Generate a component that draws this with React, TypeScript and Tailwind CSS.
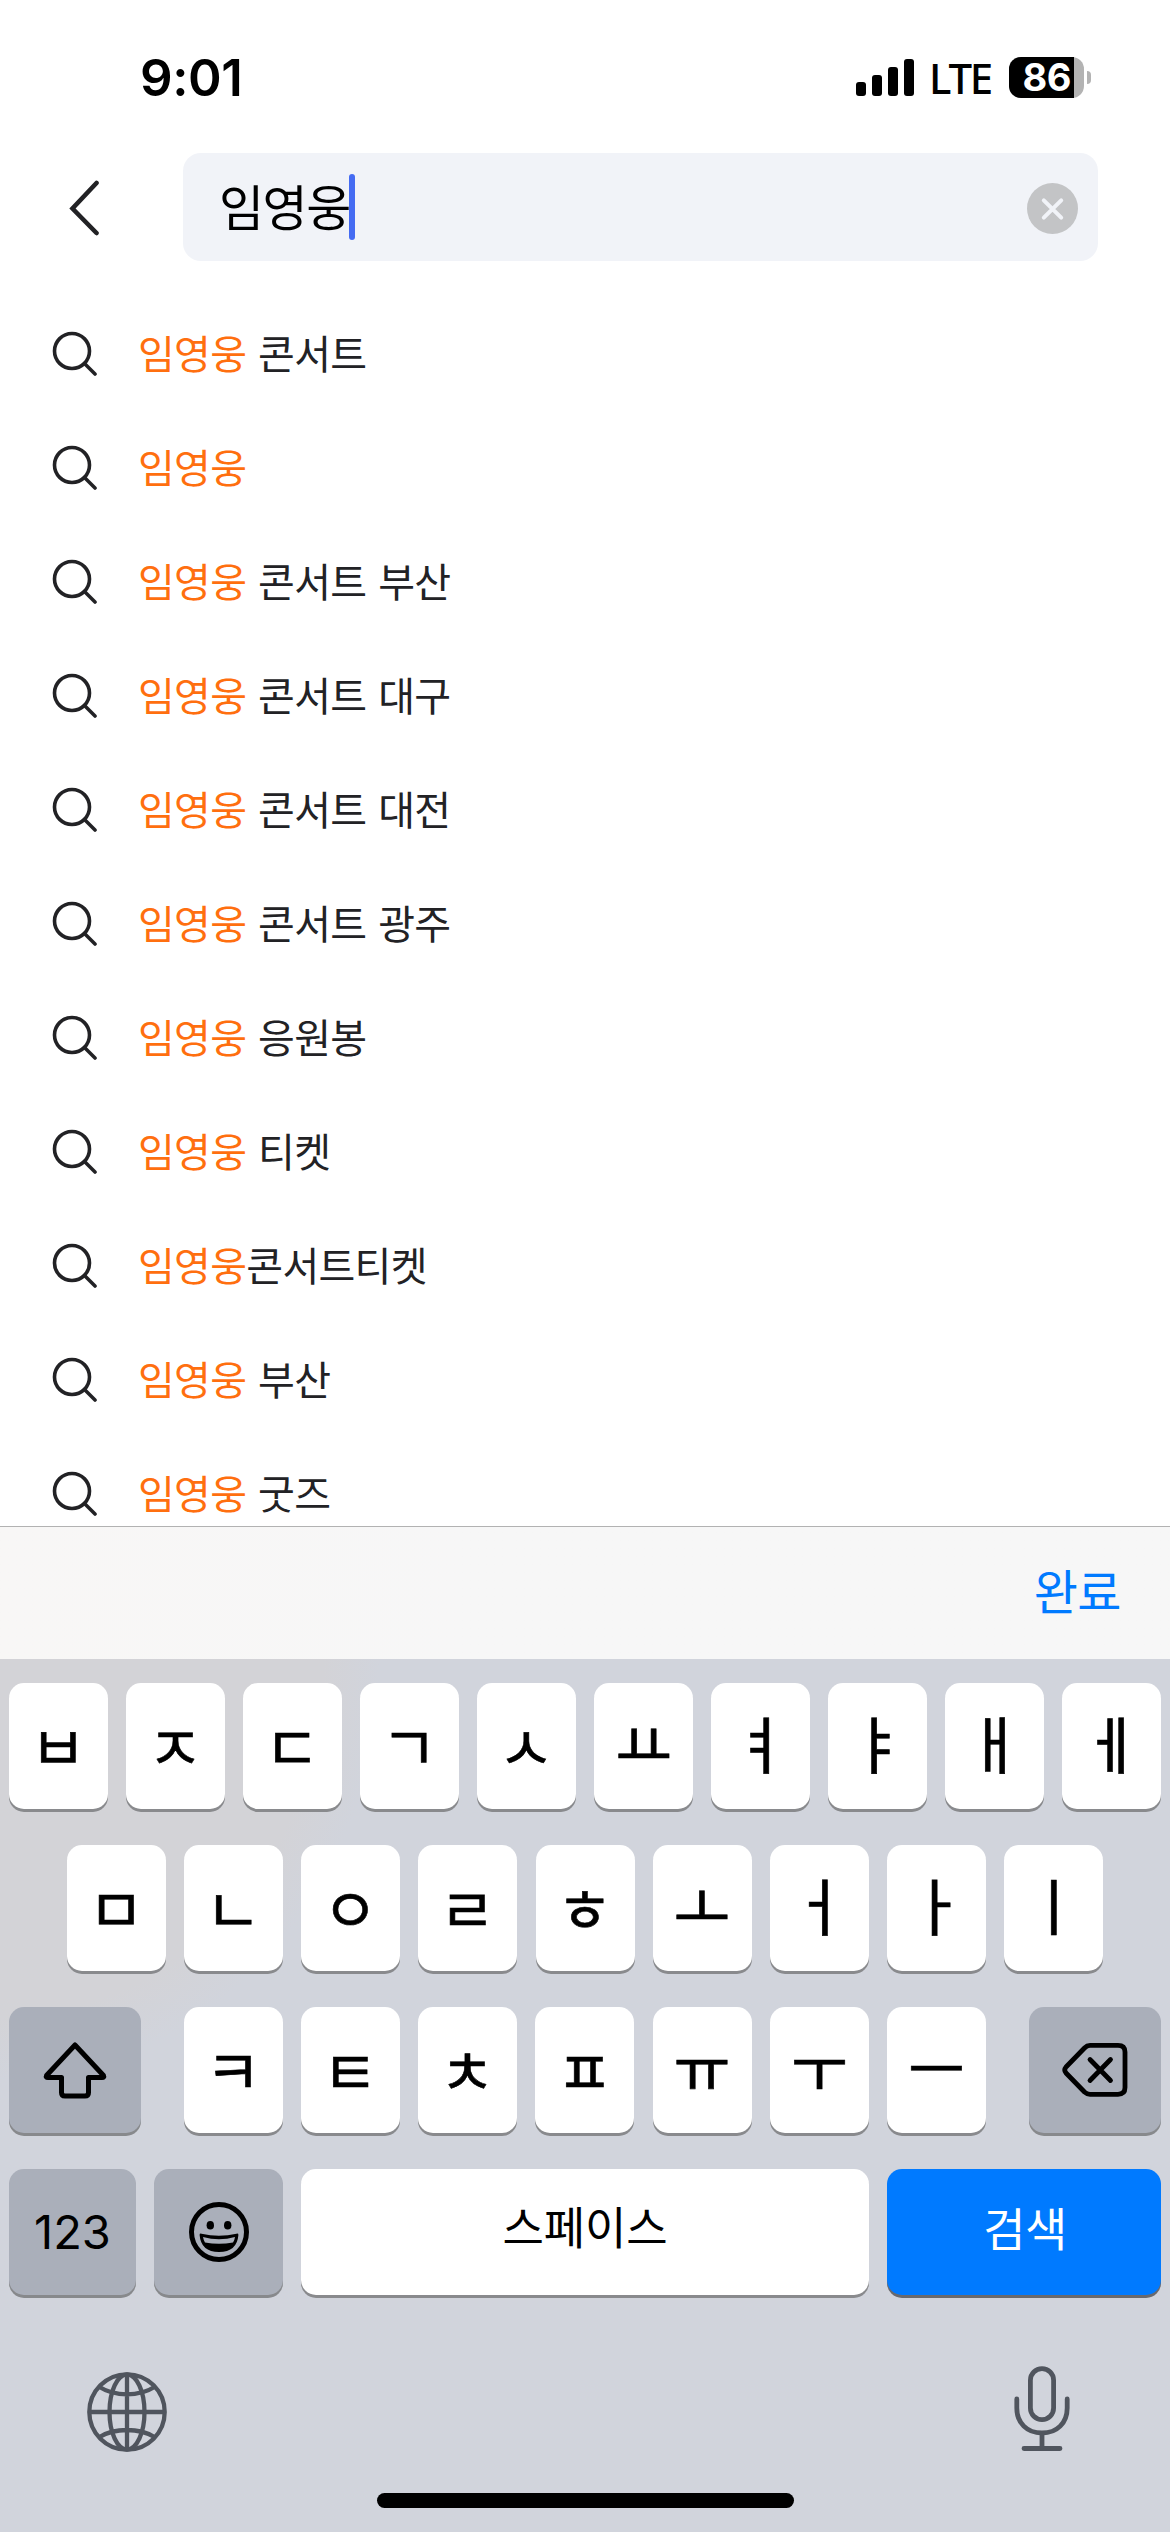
import type { ReactNode } from 'react'
import clsx from 'clsx'

const KEYWORD = '임영웅'

const suggestions = [
  ' 콘서트',
  '',
  ' 콘서트 부산',
  ' 콘서트 대구',
  ' 콘서트 대전',
  ' 콘서트 광주',
  ' 응원봉',
  ' 티켓',
  '콘서트티켓',
  ' 부산',
  ' 굿즈',
]

const topRow = ['ㅂ', 'ㅈ', 'ㄷ', 'ㄱ', 'ㅅ', 'ㅛ', 'ㅕ', 'ㅑ', 'ㅐ', 'ㅔ']
const middleRow = ['ㅁ', 'ㄴ', 'ㅇ', 'ㄹ', 'ㅎ', 'ㅗ', 'ㅓ', 'ㅏ', 'ㅣ']
const bottomRow = ['ㅋ', 'ㅌ', 'ㅊ', 'ㅍ', 'ㅠ', 'ㅜ', 'ㅡ']

function StatusBar() {
  return (
    <div className="flex h-[153px] justify-between pl-[140px] pr-[79px] pt-[57px]">
      <span className="font-['Inter',sans-serif] text-[51px] font-semibold leading-[42px] tracking-[-0.4px]">
        9:01
      </span>
      <div className="flex h-[41px] items-center">
        <div className="flex h-[37px] items-end gap-1.5">
          <span className="h-3.5 w-2.5 rounded-[3px] bg-black" />
          <span className="h-[21px] w-2.5 rounded-[3px] bg-black" />
          <span className="h-[29px] w-2.5 rounded-[3px] bg-black" />
          <span className="h-[37px] w-2.5 rounded-[3px] bg-black" />
        </div>
        <span className="ml-[15px] w-20 whitespace-nowrap font-['Noto_Sans',sans-serif] text-[42px] font-medium leading-[41px] tracking-[-2.2px]">
          LTE
        </span>
        <div className="flex h-[41px] w-[75px] rounded-xl bg-[#b3b3b3]">
          <div className="flex w-[65px] items-center justify-end rounded-l-xl bg-black pr-[3px] font-['Inter',sans-serif] text-[38px] font-bold leading-[41px] tracking-[-0.5px] text-white">
            86
          </div>
        </div>
        <span className="ml-[3px] h-[13px] w-1 rounded-r-full bg-[#b3b3b3]" />
      </div>
    </div>
  )
}

function SearchHeader() {
  return (
    <div className="flex h-[108px] items-center pr-[72px]">
      <button className="w-[183px] pl-[68px]">
        <svg width="34" height="58" viewBox="0 0 34 58" fill="none" stroke="#222225" strokeWidth="4.6" strokeLinecap="round" strokeLinejoin="miter">
          <path d="M28.500 5 L4.500 30.500 L28.500 55" />
        </svg>
      </button>
      <div className="flex h-[108px] flex-1 items-center rounded-[18px] bg-[#f1f3f8] pl-9 pr-5">
        <span className="pb-1 text-[49px] leading-[66px] tracking-[-1.5px]">{KEYWORD}</span>
        <span className="-ml-px h-[66px] w-1.5 rounded-full bg-[#456bf2]" />
        <button className="ml-auto pt-0.5">
          <svg width="51" height="51" viewBox="0 0 51 51" fill="none">
            <circle cx="25.500" cy="25.500" r="25.500" fill="#c3c4c6" />
            <path d="M16.800 17.300 L34.200 34.700 M34.200 17.300 L16.800 34.700" stroke="#f1f3f8" strokeWidth="4" strokeLinecap="round" />
          </svg>
        </button>
      </div>
    </div>
  )
}

function SuggestionRow({ rest }: { rest: string }) {
  return (
    <li className="flex h-[114px] shrink-0 items-center pl-[52px]">
      <svg className="mr-10 shrink-0" width="46" height="46" viewBox="0 0 46 46" fill="none" stroke="#222225" strokeWidth="3.6" strokeLinecap="round">
        <circle cx="20" cy="21" r="17.500" />
        <path d="M32.500 33.500 L43 44" />
      </svg>
      <span className="whitespace-pre pb-0.5 text-[40px] leading-[60px] tracking-[-0.7px] text-[#222225] [word-spacing:3.5px]">
        <span className="text-[#ff6f0f]">{KEYWORD}</span>
        {rest}
      </span>
    </li>
  )
}

type KeyProps = {
  children: ReactNode
  className?: string
  tone?: 'light' | 'dark' | 'blue'
}

function Key({ children, className = 'w-[99px]', tone = 'light' }: KeyProps) {
  return (
    <button
      className={clsx(
        'flex h-[126px] shrink-0 items-center justify-center rounded-[15px]',
        tone === 'light' && 'bg-white shadow-[0_3px_0_#898a8d]',
        tone === 'dark' && 'bg-[#aaafba] shadow-[0_3px_0_#87898c]',
        tone === 'blue' && 'bg-[#007aff] text-white shadow-[0_3px_0_#68696e]',
        className,
      )}
    >
      {children}
    </button>
  )
}

// Consonants sit a little lower on the cap than vowels
function JamoKey({ jamo }: { jamo: string }) {
  const isVowel = jamo >= 'ㅏ'
  return (
    <Key>
      <span
        className={clsx(
          'leading-none [-webkit-text-stroke:0.6px_#000]',
          isVowel ? 'pb-2 text-[62px]' : 'pb-1 pr-px text-[61px]',
        )}
      >
        {jamo}
      </span>
    </Key>
  )
}

function Keyboard() {
  return (
    <div className="flex h-[873px] flex-col bg-[#d1d4dc] bg-[radial-gradient(ellipse_380px_420px_at_0_0,#d3d3d7_85%,transparent)] pt-6">
      <div className="flex justify-between px-[9px]">
        {topRow.map((j) => (
          <JamoKey key={j} jamo={j} />
        ))}
      </div>
      <div className="mt-9 flex justify-between px-[67px]">
        {middleRow.map((j) => (
          <JamoKey key={j} jamo={j} />
        ))}
      </div>
      <div className="mt-9 flex justify-between px-[9px]">
        <Key tone="dark" className="w-[132px]">
          <svg width="66" height="58" viewBox="0 0 66 58" fill="none" stroke="#000" strokeWidth="5" strokeLinejoin="round">
            <path d="M33 4 L61.500 34.500 Q62.500 36.500 60 36.500 H46.500 V51.500 Q46.500 55 43 55 H23 Q19.500 55 19.500 51.500 V36.500 H6 Q3.500 36.500 4.500 34.500 Z" />
          </svg>
        </Key>
        <div className="flex w-[802px] justify-between">
          {bottomRow.map((j) => (
            <JamoKey key={j} jamo={j} />
          ))}
        </div>
        <Key tone="dark" className="w-[132px]">
          <svg width="66" height="56" viewBox="0 0 66 56" fill="none" stroke="#000" strokeWidth="4.800" strokeLinecap="round" strokeLinejoin="round">
            <path d="M28 3.400 H56 Q63 3.400 63 10 V45.500 Q63 52.300 56 52.300 H28 Q25 52.300 22.500 50 L4 31 Q1.500 28 4 25 L22.500 6 Q25 3.400 28 3.400 Z" />
            <path d="M28 17.500 L48.500 38.500 M48.500 17.500 L28 38.500" />
          </svg>
        </Key>
      </div>
      <div className="mt-9 flex gap-[18px] px-[9px]">
        <Key tone="dark" className="w-[127px]">
          <span className="font-['Inter',sans-serif] text-[47px]">123</span>
        </Key>
        <Key tone="dark" className="w-[129px]">
          <svg width="60" height="60" viewBox="0 0 60 60" fill="none">
            <circle cx="30" cy="30" r="27.500" stroke="#000" strokeWidth="5" />
            <ellipse cx="21.300" cy="23.200" rx="3.700" ry="4.300" fill="#000" />
            <ellipse cx="38.700" cy="23.200" rx="3.700" ry="4.300" fill="#000" />
            <path d="M10.600 33 Q10.500 31.300 12.500 31.700 Q30 36 47.500 31.700 Q49.500 31.300 49.400 33 Q48 50 30 50 Q12 50 10.600 33 Z" fill="#000" />
            <path d="M14 35 Q30 39.500 46 35 Q45.500 38.500 44 40.500 Q30 43 16 40.500 Q14.500 38 14 35 Z" fill="#aaafba" />
          </svg>
        </Key>
        <Key className="w-[568px]">
          <span className="pb-3 text-[45px] leading-[60px] tracking-[-0.2px]">스페이스</span>
        </Key>
        <Key tone="blue" className="w-[274px]">
          <span className="pb-3 pl-0.5 text-[46px] leading-[60px] tracking-[-0.5px]">검색</span>
        </Key>
      </div>
      <div className="flex h-[121px] items-start justify-between pl-[87px] pr-[99px] pt-[71px]">
        <svg className="mt-1.5 shrink-0" width="80" height="80" viewBox="0 0 80 80" fill="none" stroke="#50555e" strokeWidth="4.300">
          <circle cx="40" cy="40" r="37.700" />
          <ellipse cx="40" cy="40" rx="17.500" ry="37.500" />
          <path d="M40 2 V78 M2 40 H78 M12.500 15 Q24 22.300 40 22.300 Q56 22.300 67.500 15 M12.500 65 Q24 58 40 58 Q56 58 67.500 65" />
        </svg>
        <svg className="shrink-0" width="58" height="86" viewBox="0 0 58 86" fill="none" stroke="#50555e" strokeWidth="4.800" strokeLinecap="round">
          <rect x="17.400" y="2.600" width="23.200" height="51" rx="11.600" />
          <path d="M3.800 33 V42 C3.800 57 14 67 29 67 C44 67 54.200 57 54.200 42 V33 M29 67 V82.500 M11 82.500 H47" />
        </svg>
      </div>
      <div className="mb-6 mt-auto h-[15px] w-[417px] self-center rounded-full bg-black" />
    </div>
  )
}

export default function App() {
  return (
    <div className="flex h-[2532px] w-[1170px] flex-col overflow-hidden bg-white font-['Noto_Sans_CJK_KR',sans-serif] text-black">
      <StatusBar />
      <SearchHeader />
      <ul className="flex h-[1265px] flex-col overflow-hidden pt-[35px]">
        {suggestions.map((rest) => (
          <SuggestionRow key={rest} rest={rest} />
        ))}
      </ul>
      <div className="flex h-[133px] items-center justify-end border-t border-[#b2b2b2] bg-[#f7f7f7] bg-linear-to-r from-[#f8f7f6] to-[#f7f7f7] to-40% pr-[49px]">
        <button className="pb-2 text-[48px] leading-[66px] tracking-[-0.5px] text-[#007aff]">완료</button>
      </div>
      <Keyboard />
    </div>
  )
}
